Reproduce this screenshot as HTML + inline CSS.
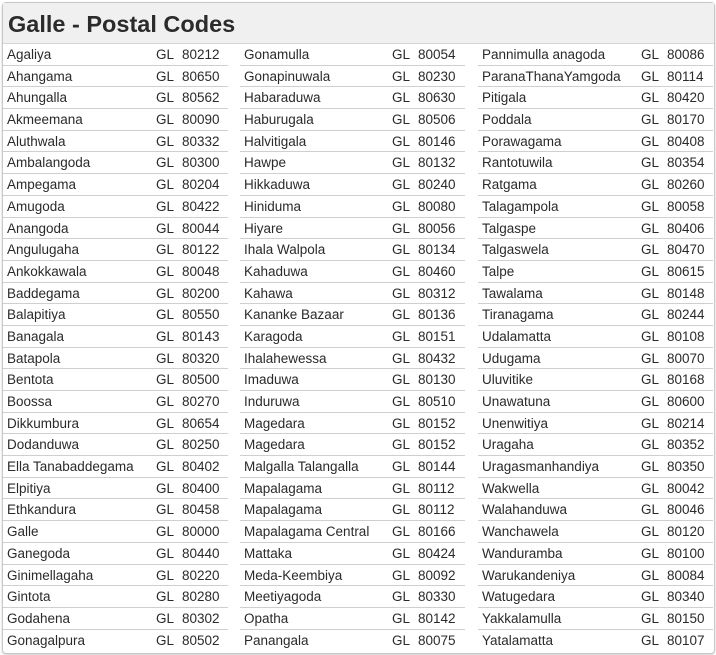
<!DOCTYPE html>
<html><head><meta charset="utf-8"><style>
*{margin:0;padding:0;box-sizing:border-box}
body{width:716px;height:655px;background:#fff;font-family:"Liberation Sans","DejaVu Sans",sans-serif;color:#2a2a2a;position:relative;overflow:hidden}
.box{position:absolute;left:2px;top:2px;width:713px;height:652px;border:1px solid #c8c8c8;border-radius:4px;box-shadow:0 1px 2px #ccc}
.hd{position:absolute;left:0;top:0;right:0;height:41px;background:#f0f0f0;border-bottom:1px solid #d6d6d6;font-weight:bold;font-size:23.5px;padding-left:5px;line-height:42px;color:#2b2b2b}
.col{position:absolute;top:44px}
.r{height:21.7px;border-bottom:1px solid #cfcfcf;position:relative;font-size:13.5px;line-height:22px}
.r span{position:absolute;top:0}
.n{left:4px}
</style></head><body><div class="box"><div class="hd">Galle - Postal Codes</div></div>
<div id="c"></div>
<script>
const d=[
["Agaliya","80212","Gonamulla","80054","Pannimulla anagoda","80086"],
["Ahangama","80650","Gonapinuwala","80230","ParanaThanaYamgoda","80114"],
["Ahungalla","80562","Habaraduwa","80630","Pitigala","80420"],
["Akmeemana","80090","Haburugala","80506","Poddala","80170"],
["Aluthwala","80332","Halvitigala","80146","Porawagama","80408"],
["Ambalangoda","80300","Hawpe","80132","Rantotuwila","80354"],
["Ampegama","80204","Hikkaduwa","80240","Ratgama","80260"],
["Amugoda","80422","Hiniduma","80080","Talagampola","80058"],
["Anangoda","80044","Hiyare","80056","Talgaspe","80406"],
["Angulugaha","80122","Ihala Walpola","80134","Talgaswela","80470"],
["Ankokkawala","80048","Kahaduwa","80460","Talpe","80615"],
["Baddegama","80200","Kahawa","80312","Tawalama","80148"],
["Balapitiya","80550","Kananke Bazaar","80136","Tiranagama","80244"],
["Banagala","80143","Karagoda","80151","Udalamatta","80108"],
["Batapola","80320","Ihalahewessa","80432","Udugama","80070"],
["Bentota","80500","Imaduwa","80130","Uluvitike","80168"],
["Boossa","80270","Induruwa","80510","Unawatuna","80600"],
["Dikkumbura","80654","Magedara","80152","Unenwitiya","80214"],
["Dodanduwa","80250","Magedara","80152","Uragaha","80352"],
["Ella Tanabaddegama","80402","Malgalla Talangalla","80144","Uragasmanhandiya","80350"],
["Elpitiya","80400","Mapalagama","80112","Wakwella","80042"],
["Ethkandura","80458","Mapalagama","80112","Walahanduwa","80046"],
["Galle","80000","Mapalagama Central","80166","Wanchawela","80120"],
["Ganegoda","80440","Mattaka","80424","Wanduramba","80100"],
["Ginimellagaha","80220","Meda-Keembiya","80092","Warukandeniya","80084"],
["Gintota","80280","Meetiyagoda","80330","Watugedara","80340"],
["Godahena","80302","Opatha","80142","Yakkalamulla","80150"],
["Gonagalpura","80502","Panangala","80075","Yatalamatta","80107"]];
const cols=[[3,225,153,179],[240,225,152,178],[478,235,163,189]];
let h='';
cols.forEach((c,i)=>{h+=`<div class="col" style="left:${c[0]}px;width:${c[1]}px">`;
d.forEach((r,j)=>{h+=`<div class="r"${j==27?' style="border-bottom:none"':''}><span class="n">${r[i*2]}</span><span style="left:${c[2]}px">GL</span><span style="left:${c[3]}px">${r[i*2+1]}</span></div>`});h+='</div>'});
document.getElementById('c').innerHTML=h;
</script></body></html>
